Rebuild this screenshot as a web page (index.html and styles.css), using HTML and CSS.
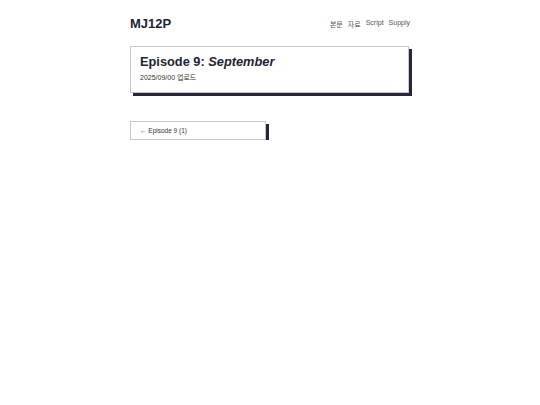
FILE: index.html
```html
<!DOCTYPE html>
<html lang="ko">
<head>
<meta charset="utf-8">
<title>MJ12P</title>
<link rel="stylesheet" href="styles.css">
</head>
<body>
<div class="page">
  <header class="site-header">
    <div class="logo">MJ12P</div>
    <nav class="nav">
      <a class="nav-link" href="#">본문</a>
      <a class="nav-link" href="#">자료</a>
      <a class="nav-link" href="#">Script</a>
      <a class="nav-link" href="#">Supply</a>
    </nav>
  </header>
  <section class="card">
    <h1 class="title">Episode 9: <em>September</em></h1>
    <p class="meta">2025/09/00 업로드</p>
  </section>
  <a class="btn" href="#">← Episode 9 (1)</a>
</div>
</body>
</html>
```
FILE: styles.css
```css
html, body {
  margin: 0;
  padding: 0;
  background: #ffffff;
}
body {
  font-family: "Liberation Sans", Arial, "Noto Sans CJK KR", sans-serif;
  color: #222433;
}
.page {
  width: 280px;
  margin: 0 auto;
  display: flex;
  flex-direction: column;
  align-items: flex-start;
}
.site-header {
  width: 100%;
  display: flex;
  justify-content: space-between;
  align-items: center;
  padding-top: 15px;
  height: 16px;
}
.logo {
  font-size: 13px;
  font-weight: bold;
  color: #222433;
}
.nav {
  display: flex;
  gap: 5px;
  font-size: 7px;
  padding-top: 1px;
}
.nav-link,
.nav-link:visited {
  color: #555555;
  text-decoration: none;
}
.card {
  box-sizing: border-box;
  width: 279px;
  margin-top: 15px;
  border: 1px solid #c8c8cc;
  box-shadow: 3px 3px 0 #262838;
  padding: 7px 9px 10px;
}
.title {
  margin: 0;
  font-size: 12.8px;
  font-weight: bold;
  line-height: 16px;
  color: #222433;
}
.meta {
  margin: 4px 0 0;
  font-size: 7px;
  line-height: 8px;
  color: #333;
}
.btn {
  box-sizing: border-box;
  width: 136px;
  height: 19px;
  margin-top: 28px;
  border: 1px solid #c8c8cc;
  box-shadow: 3px 3px 0 #262838;
  display: flex;
  align-items: center;
  padding-left: 9px;
  font-size: 6.5px;
  color: #333;
  text-decoration: none;
}
```
